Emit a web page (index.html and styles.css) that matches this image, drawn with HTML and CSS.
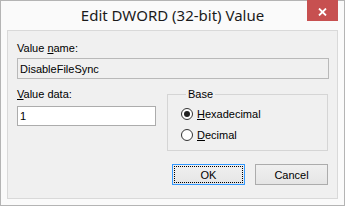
FILE: index.html
```html
<!DOCTYPE html>
<html lang="en">
<head>
  <meta charset="UTF-8">
  <title>Edit DWORD (32-bit) Value</title>
  <link rel="stylesheet" href="styles.css">
</head>
<body>
  <div class="window">
    <div class="titlebar">
      <span class="title">Edit DWORD (32-bit) Value</span>
      <button class="close" aria-label="Close">
        <svg width="9" height="8" viewBox="0 0 9 8">
          <path d="M1 0.5 L8 7.5 M8 0.5 L1 7.5" stroke="#fff" stroke-width="1.8" fill="none"/>
        </svg>
      </button>
    </div>
    <div class="client">
      <label class="label" for="name">Value <u>n</u>ame:</label>
      <input class="field readonly" id="name" value="DisableFileSync" readonly>

      <div class="row">
        <div class="data-col">
          <label class="label data-label" for="data"><u>V</u>alue data:</label>
          <input class="field data" id="data" value="1">
        </div>
        <fieldset class="base">
          <legend>Base</legend>
          <div class="option"><span class="radio checked"></span><u>H</u>exadecimal</div>
          <div class="option"><span class="radio"></span><u>D</u>ecimal</div>
        </fieldset>
      </div>

      <div class="buttons">
        <button class="btn default"><span>OK</span></button>
        <button class="btn">Cancel</button>
      </div>
    </div>
  </div>
</body>
</html>
```

FILE: styles.css
```css
html, body {
  margin: 0;
  padding: 0;
  background: #fafafa;
}
.window {
  position: relative;
  box-sizing: border-box;
  width: 345px;
  height: 206px;
  border: 1px solid #b4b4b4;
  background: #fafafa;
  font-family: "Liberation Sans", Arial, sans-serif;
  font-size: 11px;
  color: #000;
}
.titlebar {
  height: 29px;
  text-align: center;
}
.title {
  font-family: "Noto Sans", "Open Sans", sans-serif;
  font-size: 15px;
  line-height: 29px;
  color: #1a1a1a;
}
.close {
  position: absolute;
  top: -1px;
  right: 6px;
  width: 31px;
  height: 21px;
  padding: 0;
  border: none;
  background: #c75050;
  display: flex;
  align-items: center;
  justify-content: center;
  padding-top: 2px;
}
.client {
  box-sizing: border-box;
  height: 169px;
  margin: 0 6px;
  border: 1px solid #d9d9d9;
  background: #f0f0f0;
  padding: 11px 8px 0 9px;
  display: flex;
  flex-direction: column;
}
.label {
  display: block;
  line-height: 13px;
}
.field {
  box-sizing: border-box;
  height: 21px;
  margin: 3px 0 0;
  padding: 0 2px;
  border: 1px solid #acacac;
  background: #fff;
  font-family: "Liberation Sans", Arial, sans-serif;
  font-size: 11px;
  color: #000;
  outline: none;
}
.field.readonly {
  width: 312px;
  background: #f0f0f0;
  border-color: #b9b9b9;
}
.row {
  display: flex;
  gap: 11px;
  margin-top: 9px;
}
.data-col {
  width: 139px;
}
.data-label {
  margin-bottom: 5px;
}
.field.data {
  width: 139px;
  height: 20px;
  margin: 0;
}
.base {
  box-sizing: border-box;
  width: 161px;
  height: 63px;
  margin: 0;
  padding: 2px 0 0 13px;
  border: 1px solid #d5d5d5;
}
.base legend {
  margin-left: 5px;
  padding: 0 2px;
  line-height: 13px;
}
.option {
  display: flex;
  align-items: center;
  height: 21px;
}
.radio {
  position: relative;
  box-sizing: border-box;
  width: 12px;
  height: 12px;
  margin-right: 4px;
  border: 1px solid #333;
  border-radius: 50%;
  background: #fff;
}
.radio.checked::after {
  content: "";
  position: absolute;
  top: 2px;
  left: 2px;
  width: 6px;
  height: 6px;
  border-radius: 50%;
  background: #222;
}
.buttons {
  display: flex;
  justify-content: flex-end;
  gap: 10px;
  margin-top: 13px;
  padding-right: 1px;
}
.btn {
  box-sizing: border-box;
  width: 73px;
  height: 21px;
  padding: 0;
  border: 1px solid #acacac;
  background: linear-gradient(#f0f0f0, #e5e5e5);
  font-family: "Liberation Sans", Arial, sans-serif;
  font-size: 11px;
  color: #000;
}
.btn.default {
  border-color: #3399ff;
  outline: 1px dotted #000;
  outline-offset: -3px;
}
```
